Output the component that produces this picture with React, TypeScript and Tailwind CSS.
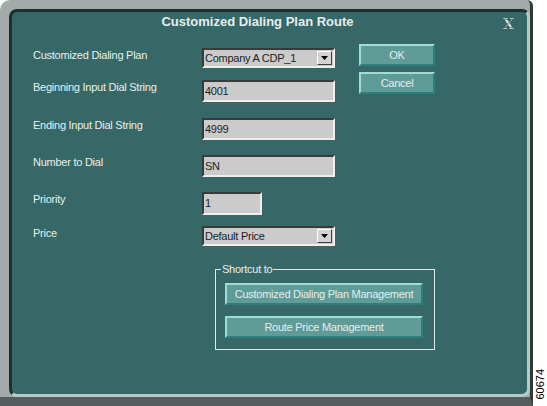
import React from "react";

const field =
  "h-[22px] bg-[#cbcbcb] border-2 border-t-[#3a3a3a] border-l-[#3a3a3a] border-b-[#eeeeee] border-r-[#eeeeee] flex items-center pl-[1px] text-[11px] text-[#1e1e1e]";

const tealButton =
  "h-[22px] bg-[#5f9c98] border-2 border-t-[#9fdcd6] border-l-[#9fdcd6] border-b-[#2c7f7a] border-r-[#2c7f7a] flex items-center justify-center text-[11px] text-[#e4eeed]";

function Select({ value }: { value: string }) {
  return (
    <div className="h-[20px] w-[133px] bg-[#cbcbcb] border-2 border-t-[#3a3a3a] border-l-[#3a3a3a] border-b-[#eeeeee] border-r-[#eeeeee] flex items-center text-[11px] text-[#1e1e1e]">
      <span className="flex-1 pl-[1px] truncate">{value}</span>
      <span className="w-[15px] h-[14px] mr-[1px] bg-[#d4d4d4] border border-t-white border-l-white border-b-[#404040] border-r-[#404040] flex items-center justify-center">
        <svg width="7" height="4" viewBox="0 0 7 4">
          <polygon points="0,0 7,0 3.5,4" fill="#000" />
        </svg>
      </span>
    </div>
  );
}

function Row({ label, top, children }: { label: string; top: string; children: React.ReactNode }) {
  return (
    <div className={`flex items-start ${top}`}>
      <span className="w-[169px] leading-[14px] text-[11px] text-[#e8f0ef]">{label}</span>
      {children}
    </div>
  );
}

function CloseIcon() {
  return (
    <svg width="11" height="11" viewBox="0 0 11 11">
      <g fill="#dfe8e7" stroke="#1d2f2f" strokeWidth="0.4">
        <polygon points="1,1 4.2,1 10,10 6.8,10" />
        <polygon points="8.8,1 10,1 2.2,10 1,10" />
        <rect x="0" y="0" width="5" height="1.3" />
        <rect x="6.5" y="0" width="4.5" height="1.3" />
        <rect x="0" y="9.7" width="4.5" height="1.3" />
        <rect x="6" y="9.7" width="5" height="1.3" />
      </g>
    </svg>
  );
}

export default function App() {
  return (
    <div className="w-[547px] h-[406px] bg-white flex font-['Liberation_Sans',Arial,sans-serif] tracking-[-0.25px] overflow-hidden">
      {/* window frame */}
      <div className="w-[533px] h-[406px] shrink-0 bg-[#a2abaa] rounded-tl-[10px] rounded-tr-[6px] pt-[9px] pl-[9px] border-r-[3px] border-b-[9px] border-r-[#323838] border-b-[#555d5d]">
        <div className="h-full bg-[#356866] rounded-[8px] border-[3px] border-t-[#1b3131] border-l-[#1b3131] border-b-[#b6cac7] border-r-[#b6cac7] flex flex-col">
          {/* title */}
          <div className="h-[20px] flex items-center">
            <span className="flex-1 text-center text-[13px] font-bold tracking-normal text-[#e6eeee] leading-[20px]">
              Customized Dialing Plan Route
            </span>
            <span className="mr-[13px] mt-[2px] flex">
              <CloseIcon />
            </span>
          </div>

          <div className="pl-[21px] pt-[12px]">
            <div className="flex items-start">
              <div className="w-[302px] pt-[4px] flex flex-col">
                <Row label="Customized Dialing Plan" top="">
                  <Select value="Company A CDP_1" />
                </Row>
                <Row label="Beginning Input Dial String" top="mt-[12px]">
                  <div className={`${field} w-[133px]`}>4001</div>
                </Row>
                <Row label="Ending Input Dial String" top="mt-[16px]">
                  <div className={`${field} w-[133px]`}>4999</div>
                </Row>
                <Row label="Number to Dial" top="mt-[15px]">
                  <div className={`${field} w-[133px]`}>SN</div>
                </Row>
                <Row label="Priority" top="mt-[15px]">
                  <div className={`${field} w-[60px] h-[23px]`}>1</div>
                </Row>
                <Row label="Price" top="mt-[11px]">
                  <Select value="Default Price" />
                </Row>
              </div>
              <div className="ml-[24px] w-[76px] flex flex-col gap-[6px]">
                <button className={tealButton}>OK</button>
                <button className={tealButton}>Cancel</button>
              </div>
            </div>

            {/* shortcut group */}
            <div className="ml-[182px] mt-[23px] w-[220px] border border-[#dfe9e7] pl-[9px] pb-[11px]">
              <div className="-mt-[7px] -ml-[4px] w-fit px-[1px] bg-[#356866] leading-[13px] text-[11px] text-[#e8f0ef]">
                Shortcut to
              </div>
              <button className={`${tealButton} w-[198px] mt-[7px]`}>Customized Dialing Plan Management</button>
              <button className={`${tealButton} w-[198px] mt-[11px]`}>Route Price Management</button>
            </div>
          </div>
        </div>
      </div>

      {/* figure number strip */}
      <div className="flex-1 flex flex-col justify-end items-center pb-[6px]">
        <span className="[writing-mode:vertical-rl] rotate-180 text-[11px] leading-[12px] tracking-normal text-black">
          60674
        </span>
      </div>
    </div>
  );
}
